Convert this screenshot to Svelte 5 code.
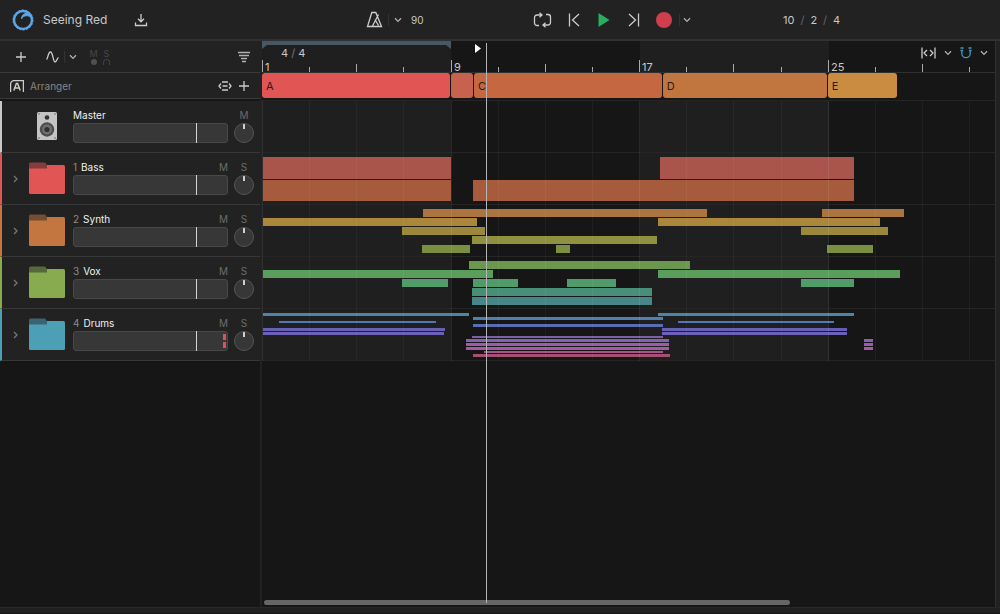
<script>
  const BAR = 23.57;

  const tracks = [
    {
      n: 1, name: 'Bass', color: '#e15555', tab: '#863c3d', peak: false,
      lanes: [
        { color: '#a9554c', clips: [[1, 188], [398, 194]] },
        { color: '#a75b3d', clips: [[1, 188], [211, 381]] },
      ],
    },
    {
      n: 2, name: 'Synth', color: '#c3763f', tab: '#754d33', peak: false,
      lanes: [
        { color: '#ac743f', clips: [[161, 284], [560, 82]] },
        { color: '#aa873a', clips: [[1, 214], [396, 222]] },
        { color: '#9b883d', clips: [[140, 83], [539, 87]] },
        { color: '#8f9141', clips: [[210, 185]] },
        { color: '#7b8f41', clips: [[160, 48], [294, 14], [565, 46]] },
      ],
    },
    {
      n: 3, name: 'Vox', color: '#87ab4e', tab: '#56693a', peak: false,
      lanes: [
        { color: '#6b984e', clips: [[207, 221]] },
        { color: '#5b9e5c', clips: [[1, 230], [396, 242]] },
        { color: '#519a6a', clips: [[140, 46], [211, 45], [305, 49], [539, 53]] },
        { color: '#478f76', clips: [[210, 180]] },
        { color: '#478788', clips: [[210, 180]] },
      ],
    },
    {
      n: 4, name: 'Drums', color: '#4d9fb6', tab: '#3b6472', peak: true,
      lanes: [
        { color: '#4a86a8', clips: [[1, 206], [396, 196]] },
        { color: '#5080b0', clips: [[211, 190]] },
        { color: '#5277b4', clips: [[17, 157], [416, 156]] },
        { color: '#5a6cb4', clips: [[211, 190]] },
        { color: '#6560b4', clips: [[1, 182], [400, 185]] },
        { color: '#6c60b8', clips: [[1, 181], [400, 185]] },
        { color: '#7a60ac', clips: [[210, 191]] },
        { color: '#8860b0', clips: [[204, 203], [602, 9]] },
        { color: '#965eac', clips: [[204, 203], [602, 9]] },
        { color: '#a25ca6', clips: [[204, 203], [602, 9]] },
        { color: '#a4568c', clips: [[222, 179]] },
        { color: '#a5506e', clips: [[211, 197]] },
      ],
    },
  ];

  const sections = [
    { label: 'A', bars: 8, color: '#e15555' },
    { label: '', bars: 1, color: '#c7624f' },
    { label: 'C', bars: 8, color: '#c56841' },
    { label: 'D', bars: 7, color: '#c2763f' },
    { label: 'E', bars: 3, color: '#c98c41' },
  ];

  const ticks = Array.from({ length: 16 }, (_, i) => ({
    x: Math.round(i * 2 * BAR),
    label: i % 4 === 0 ? String(i * 2 + 1) : '',
    kind: i % 4 === 0 ? 'major' : i % 2 === 0 ? 'mid' : 'minor',
  }));
</script>

{#snippet chevron()}
  <svg width="8" height="6" viewBox="0 0 8 6" class="line"><path d="M1 1.2 4 4.4 7 1.2" /></svg>
{/snippet}

{#snippet channel(name, n, peak)}
  <div class="channel">
    <div class="title">
      {#if n}<span class="num">{n}</span>{/if}
      <span class="name">{name}</span>
      {#if n}<button class="ms" aria-label="Mute {name}">M</button>{/if}
    </div>
    <div class="fader">
      <input type="range" min="0" max="100" value="80" aria-label="{name} volume" />
      {#if peak}<i class="peak"></i>{/if}
    </div>
  </div>
  <div class="side">
    <button class="ms" aria-label="{n ? 'Solo' : 'Mute'} {name}">{n ? 'S' : 'M'}</button>
    <button class="knob" aria-label="{name} pan"></button>
  </div>
{/snippet}

<div class="app">
  <header>
    <div class="group project">
      <svg width="22" height="22" viewBox="0 0 22 22">
        <circle cx="11" cy="11" r="9" fill="none" stroke="#5ba6ea" stroke-width="2.4" />
        <circle cx="11" cy="11" r="10" fill="none" stroke="#5ba6ea" stroke-width="1" stroke-dasharray="2 1.5" />
        <path d="M9.600 9.800C9.400 6 13 3.400 16.500 4.200L19.500 8.600C16 5.800 11.600 6 9.600 9.800Z" fill="#5ba6ea" stroke="#5ba6ea" stroke-width="1" />
      </svg>
      <h1>Seeing Red</h1>
      <button class="save" aria-label="Download">
        <svg width="14" height="14" viewBox="0 0 14 14" class="line bright"><path d="M7 1v7.5M4 5.800l3 3 3-3M1.500 9.500v3h11v-3" /></svg>
      </button>
    </div>
    <div class="group tempo">
      <button aria-label="Metronome">
        <svg width="17" height="17" viewBox="0 0 17 17" class="line bright"><path d="M5.800 1.500h4L15.500 15.500h-14zM6.500 15l6-11.500M9 8.500l3.500 6" /></svg>
      </button>
      <i class="sep"></i>
      <button aria-label="Metronome options">{@render chevron()}</button>
      <span class="bpm">90</span>
    </div>
    <div class="group transport">
      <button aria-label="Loop">
        <svg width="19" height="16" viewBox="0 0 19 16" class="line bright"><path d="M6 13.500H4A2.500 2.500 0 0 1 1.500 11V5.500A2.500 2.500 0 0 1 4 3h4.500M6.500 .8 9 3 6.500 5.200M13 2.500h2A2.500 2.500 0 0 1 17.500 5v5.500A2.500 2.500 0 0 1 15 13h-4.500M12.500 10.800 10 13l2.500 2.200" /></svg>
      </button>
      <button aria-label="Go to start">
        <svg width="12" height="14" viewBox="0 0 12 14" class="line bright"><path d="M1.500 .5v13M11 1 4.500 7 11 13" /></svg>
      </button>
      <button aria-label="Play">
        <svg width="12" height="14" viewBox="0 0 12 14"><path d="M.5 0 11.500 7 .5 14z" fill="#27ae60" /></svg>
      </button>
      <button aria-label="Go to end">
        <svg width="12" height="14" viewBox="0 0 12 14" class="line bright"><path d="M10.500 .5v13M1 1l6.500 6L1 13" /></svg>
      </button>
      <button class="record" aria-label="Record"></button>
      <i class="sep"></i>
      <button aria-label="Record options">{@render chevron()}</button>
    </div>
    <div class="group position">
      <span>10</span><i>/</i><span>2</span><i>/</i><span>4</span>
    </div>
  </header>

  <main>
    <aside>
      <div class="toolbar">
        <button aria-label="Add track">
          <svg width="12" height="12" viewBox="0 0 12 12" class="line bright"><path d="M6 1v10M1 6h10" /></svg>
        </button>
        <button class="wave" aria-label="Automation">
          <svg width="13" height="12" viewBox="0 0 13 12" class="line bright"><path d="M.5 8.500C2 7.500 2 1 4.500 1S7 11 9 11s2-4 3.500-4.500" /></svg>
        </button>
        <i class="sep"></i>
        <button aria-label="Automation options">{@render chevron()}</button>
        <div class="status"><span>M</span><span>S</span><i class="dot"></i><i class="phones"></i></div>
        <button class="filter" aria-label="Filter tracks">
          <svg width="14" height="12" viewBox="0 0 14 12" class="line"><path d="M1 1.500h12M2 4.500h10M4 7.500h6M5 10.500h4" /></svg>
        </button>
      </div>
      <div class="arranger">
        <svg width="14" height="12" viewBox="0 0 14 12" class="line bright"><path d="M.6 12V4A3.400 3.400 0 0 1 4 .6h9.400V12" /><path d="M3.800 10.500 6.400 3.500h1.200l2.600 7M4.800 8h4.400" stroke-width="1.500" /></svg>
        <span>Arranger</span>
        <button aria-label="Resize sections">
          <svg width="14" height="10" viewBox="0 0 14 10" class="line bright"><path d="M3 2.500 1 5l2 2.500M11 2.500 13 5l-2 2.500M4 1h6M4.500 5h5M4 9h6" /></svg>
        </button>
        <button aria-label="Add section">
          <svg width="12" height="12" viewBox="0 0 12 12" class="line bright"><path d="M6 1v10M1 6h10" /></svg>
        </button>
      </div>
      <div class="tracks">
        <div class="track" style="--c: #c8c8c8">
          <span class="expand"></span>
          <span class="art">
            <svg width="20" height="28" viewBox="0 0 20 28">
              <rect width="20" height="28" rx="1.500" fill="#c4c4c4" />
              <circle cx="10" cy="5.500" r="2.300" fill="#333" />
              <circle cx="10" cy="17.500" r="7.200" fill="#4c4c4c" />
              <circle cx="10" cy="17.500" r="5" fill="#707070" />
              <circle cx="10" cy="17.500" r="2.600" fill="#303030" />
              <g fill="#666"><circle cx="2" cy="2" r=".8" /><circle cx="18" cy="2" r=".8" /><circle cx="2" cy="26" r=".8" /><circle cx="18" cy="26" r=".8" /></g>
            </svg>
          </span>
          {@render channel('Master', 0, false)}
        </div>
        {#each tracks as t}
          <div class="track" style="--c: {t.color}">
            <button class="expand" aria-label="Expand {t.name}">
              <svg width="5" height="8" viewBox="0 0 5 8" class="line dim"><path d="M1 1l3 3-3 3" /></svg>
            </button>
            <span class="art">
              <svg width="36" height="32" viewBox="0 0 36 32">
                <rect y="3" width="36" height="29" rx="1.500" fill={t.color} />
                <path d="M0 6.500V2A1.500 1.500 0 0 1 1.500 .5H16L18 3v3.500z" fill={t.tab} />
              </svg>
            </span>
            {@render channel(t.name, t.n, t.peak)}
          </div>
        {/each}
      </div>
    </aside>

    <section class="timeline">
      <div class="ruler">
        <div class="band">
          <i class="lit"></i><i></i><i class="lit"></i>
        </div>
        <svg class="loop" width="189" height="8" viewBox="0 0 189 8"><path d="M0 0h189v8l-5-4H5L0 8z" fill="#455864" /></svg>
        {#each ticks as t}
          <span class="tick {t.kind}" style="left: {t.x}px">{t.label}</span>
        {/each}
        <span class="meter">4 <i>/</i> 4</span>
        <div class="tools">
          <button aria-label="Zoom to fit">
            <svg width="15" height="12" viewBox="0 0 15 12" class="line bright"><path d="M1 .5v11M14 .5v11M6 3 3 6l3 3M9 3l3 3-3 3" /></svg>
          </button>
          <button aria-label="Zoom options">{@render chevron()}</button>
          <button aria-label="Snap">
            <svg width="12" height="12" viewBox="0 0 12 12" class="line snap"><path d="M1.800 3.500V6.500a4.200 4.200 0 0 0 8.400 0V3.500M.5 1h3M8.500 1h3M.5 3.500H3M9 3.500h2.500" /></svg>
          </button>
          <button aria-label="Snap options">{@render chevron()}</button>
        </div>
      </div>
      <div class="sections">
        {#each sections as s}
          <div class="slot" style="width: {s.bars * BAR}px">
            <button class="part" style="background: {s.color}" aria-label="Section {s.label}">{s.label}</button>
          </div>
        {/each}
      </div>
      <div class="rows">
        <div class="band"><i class="lit"></i><i></i><i class="lit"></i></div>
        <div class="row"></div>
        {#each tracks as t}
          <div class="row">
            {#each t.lanes as lane}
              <div class="lane">
                {#each lane.clips as [x, w]}
                  <i class="clip" style="left: {x}px; width: {w}px; background: {lane.color}"></i>
                {/each}
              </div>
            {/each}
          </div>
        {/each}
        {#each ticks as t}
          <i class="grid {t.kind}" style="left: {t.x}px"></i>
        {/each}
      </div>
      <div class="scroll"><i></i></div>
      <svg class="marker" width="6" height="9" viewBox="0 0 6 9"><path d="M0 0 6 4.500 0 9z" fill="#fff" /></svg>
      <i class="playhead"></i>
    </section>
    <div class="gutter"></div>
  </main>
  <footer></footer>
</div>

<style>
  :global(body) { margin: 0; background: #161616; }
  * { box-sizing: border-box; }
  .app {
    display: flex; flex-direction: column; min-height: 100vh;
    background: #161616; color: #c8c8c8;
    font: 11px/16px Inter, sans-serif;
  }
  svg { display: block; flex: none; }
  i { font-style: normal; }
  button {
    display: flex; align-items: center; justify-content: center;
    padding: 0; border: 0; background: none; color: inherit; font: inherit;
  }
  .line { fill: none; stroke: #b0b0b0; stroke-width: 1.3; }
  .bright { stroke: #cccccc; }
  .dim { stroke: #777; }
  .snap { stroke: #3b9cc4; }
  .sep { width: 1px; height: 12px; background: #333; }

  header {
    display: grid; grid-template-columns: 366fr 167fr 250fr 217fr;
    height: 41px; border-bottom: 2px solid #323232; background: #222;
  }
  .group { display: flex; align-items: center; }
  .project { padding-left: 12px; }
  h1 { margin: 0 0 0 9px; font-size: 12px; line-height: 16px; font-weight: 400; }
  .save { margin-left: 27px; }
  .tempo { gap: 5px; }
  .bpm { margin-left: 4px; font-size: 10px; }
  .transport { gap: 14px; }
  .transport > button { min-width: 16px; }
  .record { width: 16px; height: 16px; border-radius: 50%; background: #cf3e4c; }
  .transport .sep { margin: 0 -11px 0 -7px; }
  .transport button:last-child { min-width: 8px; }
  .position { gap: 6px; }
  .position i { color: #666; }

  main { display: grid; grid-template-columns: 262px 1fr 5px; flex: 1; }
  aside { border-right: 2px solid #222; }
  .toolbar, .arranger { display: flex; align-items: center; background: #222; border-bottom: 1px solid #3a3a3a; }
  .toolbar { height: 32px; padding: 0 9px 0 15px; }
  .wave { margin: 0 5px 0 19px; }
  .toolbar .sep { margin-right: 4px; }
  .status {
    display: grid; grid-template-columns: 13px 13px; justify-items: center; align-items: center;
    margin-left: 10px; color: #484848; font-size: 9px; line-height: 10px;
  }
  .dot { width: 6px; height: 6px; border-radius: 50%; background: #505050; }
  .phones { width: 7px; height: 6px; border: 1px solid #404040; border-bottom: 0; border-radius: 4px 4px 0 0; }
  .filter { margin-left: auto; }
  .arranger { height: 26px; padding: 0 10px; gap: 6px; color: #868686; font-size: 10px; }
  .arranger span { flex: 1; }

  .tracks { padding-top: 2px; font-size: 10px; }
  .track {
    display: flex; height: 52px; padding-right: 6px;
    background: #222; border-left: 2px solid var(--c); border-bottom: 1px solid #383838;
  }
  .expand { width: 27px; }
  .art { display: flex; align-items: center; justify-content: center; width: 36px; padding-bottom: 2px; }
  .channel { flex: 1; margin-left: 8px; padding-top: 5px; }
  .title { display: flex; height: 17px; align-items: center; gap: 4px; }
  .num { color: #8a8a8a; }
  .name { flex: 1; color: #f0f0f0; }
  .ms { height: 17px; width: 9px; color: #6c6c6c; font-size: 10px; }
  .side { display: flex; flex-direction: column; align-items: center; width: 20px; margin-left: 6px; padding-top: 5px; }
  .knob {
    width: 20px; height: 20px; border: 1px solid #555; border-radius: 50%;
    background: linear-gradient(#d0d0d0, #d0d0d0) center top / 2px 5px no-repeat #373737;
  }
  .fader { position: relative; height: 20px; }
  input {
    appearance: none; display: block; width: 100%; height: 20px; margin: 0;
    border: 1px solid #484848; border-radius: 3px; background: #373737;
  }
  input::-webkit-slider-thumb { appearance: none; width: 1px; height: 20px; background: #d4d4d4; }
  .peak {
    position: absolute; right: 2px; top: 3px; width: 3px; height: 14px;
    background: linear-gradient(#e0505c 0 6px, #373737 6px 8px, #e0505c 8px);
  }

  .timeline { position: relative; display: flex; flex-direction: column; min-width: 0; overflow: hidden; }
  .ruler { position: relative; height: 32px; border-bottom: 1px solid #303030; display: flex; justify-content: space-between; }
  .band { position: absolute; inset: 0; display: flex; }
  .band i { width: 189px; flex: none; }
  .band .lit { background: #1f1f1f; }
  .loop { position: absolute; left: 0; top: 0; }
  .tick { position: absolute; bottom: 0; height: 5px; border-left: 1px solid #aaa; padding-left: 2px; color: #c8c8c8; line-height: 14px; }
  .tick.mid { height: 8px; }
  .tick.major { height: 12px; }
  .meter { position: relative; margin: 4px 0 0 19px; }
  .meter i { color: #777; }
  .tools { position: relative; display: flex; align-items: center; gap: 8px; height: 23px; padding-right: 7px; }
  .sections { display: flex; height: 28px; padding-bottom: 2px; border-bottom: 1px solid #242424; }
  .slot { flex: none; padding-right: 1px; }
  .part { width: 100%; height: 25px; padding-left: 4px; justify-content: flex-start; border-radius: 3px; color: #2e1a14; }
  .rows { position: relative; }
  .row {
    position: relative; display: flex; flex-direction: column; gap: 1px;
    height: 52px; padding: 4px 0 3px; border-bottom: 1px solid #252525;
  }
  .lane { position: relative; flex: 1; }
  .clip { position: absolute; top: 0; bottom: 0; }
  .grid { position: absolute; top: 0; bottom: 0; width: 1px; background: rgb(255 255 255 / 4%); }
  .grid.major { background: rgb(255 255 255 / 8%); }
  .scroll { margin-top: auto; padding: 0 0 2px 2px; }
  .scroll i { display: block; width: 72%; height: 5px; border-radius: 3px; background: #666; }
  .marker { position: absolute; left: 213px; top: 3px; }
  .playhead { position: absolute; left: 224px; top: 2px; bottom: 4px; width: 1px; background: #b4b4b4; }
  .gutter { background: #222; border-left: 1px solid #303030; }
  footer { height: 7px; background: #222; border-top: 1px solid #282828; border-bottom: 1px solid #111; }
</style>
